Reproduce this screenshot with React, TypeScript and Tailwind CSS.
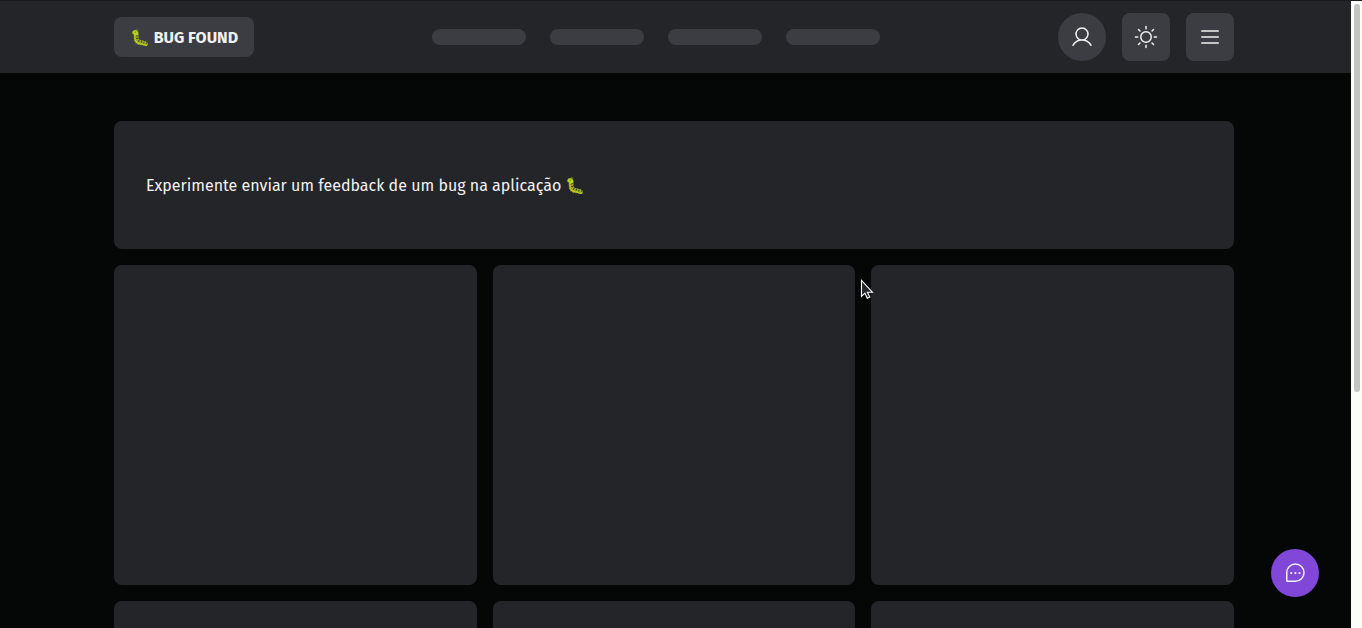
import { PiChatTeardropDots, PiList, PiSun, PiUser } from "react-icons/pi";

function Header() {
  return (
    <header className="h-[73px] border-t border-[#19191f] bg-[#242529] pl-[114px]">
      <div className="grid h-[72px] w-[1120px] grid-cols-[318px_448px_1fr] items-center">
        <div className="flex h-10 w-[140px] items-center justify-center rounded-lg bg-[#3c3d42] pt-0.5">
          <span className="whitespace-nowrap text-base font-bold">🐛 BUG FOUND</span>
        </div>
        <nav className="flex gap-6">
          {[0, 1, 2, 3].map((i) => (
            <div key={i} className="h-4 w-[94px] rounded-full bg-[#3c3d42]" />
          ))}
        </nav>
        <div className="flex justify-end gap-4">
          <button className="flex size-12 items-center justify-center rounded-full bg-[#3c3d42]"><PiUser size={24} /></button>
          <button className="flex size-12 items-center justify-center rounded-lg bg-[#3c3d42]"><PiSun size={24} /></button>
          <button className="flex size-12 items-center justify-center rounded-lg bg-[#3c3d42]"><PiList size={24} /></button>
        </div>
      </div>
    </header>
  );
}

export default function App() {
  return (
    <div className="relative flex h-[628px] w-[1362px] overflow-hidden bg-[#050706] font-['Fira_Sans','Noto_Sans',sans-serif] text-[#f1f1f1]">
      <div className="h-full w-[1351px] overflow-hidden">
        <Header />
        <main className="w-[1234px] pt-12 pl-[114px]">
          <section className="flex h-32 items-center rounded-lg bg-[#242529] px-8 pt-0.5">
            <p className="whitespace-nowrap text-base">Experimente enviar um feedback de um bug na aplicação 🐛</p>
          </section>
          <div className="mt-4 grid grid-cols-3 gap-4">
            {[0, 1, 2, 3, 4, 5].map((i) => (
              <div key={i} className="h-80 rounded-lg bg-[#242529]" />
            ))}
          </div>
        </main>
      </div>
      <div className="flex h-full w-[11px] flex-col items-center border-t border-[#19191f] bg-[#fcfdf8] pt-[3px]">
        <div className="h-[388px] w-1.5 rounded-full bg-[#c4c5c3]" />
      </div>
      <button className="absolute top-[549px] left-[1271px] flex size-12 items-center justify-center rounded-full bg-[#8047d9]">
        <PiChatTeardropDots size={24} />
      </button>
      <svg viewBox="0 0 14 21" className="absolute top-[279px] left-[860px] h-[21px] w-[14px]">
        <path d="M1.5 1.5v16l3.4-3.3 2.4 5 2.5-1.2-2.4-4.8h5z" fill="#242529" stroke="#fff" strokeWidth="1.1" />
      </svg>
    </div>
  );
}
